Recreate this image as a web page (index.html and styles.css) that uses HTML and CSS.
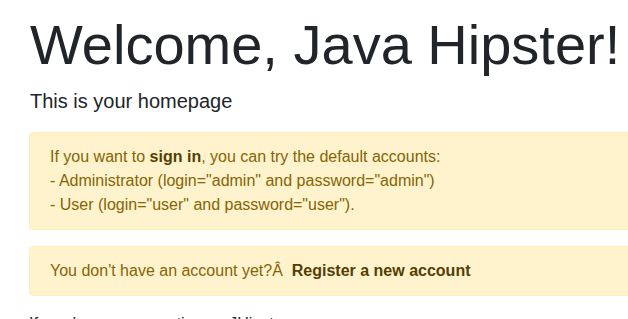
FILE: index.html
```html
<!DOCTYPE html>
<html lang="en">
<head>
    <meta charset="UTF-8">
    <meta name="viewport" content="width=device-width, initial-scale=1.0">
    <title>Home</title>
    <link rel="stylesheet" href="styles.css">
</head>
<body>
    <div class="container">
        <div class="col-main">
            <h1 class="display-4">Welcome, Java Hipster!</h1>
            <p class="lead">This is your homepage</p>

            <div class="alert alert-warning">
                If you want to <a class="alert-link" href="#">sign in</a>, you can try the default accounts:<br>
                - Administrator (login="admin" and password="admin")<br>
                - User (login="user" and password="user").
            </div>

            <div class="alert alert-warning">
                You don't have an account yet?Â&nbsp;
                <a class="alert-link" href="#">Register a new account</a>
            </div>

            <p>If you have any question on JHipster:</p>
        </div>
    </div>
</body>
</html>
```

FILE: styles.css
```css
html, body {
    overflow: hidden;
}
body {
    font-family: "Liberation Sans", Arial, sans-serif;
    font-size: 16px;
    line-height: 1.5;
    color: #212529;
    background-color: #fff;
    margin: 0;
    padding: 0;
}
.container {
    width: 760px;
    padding: 11px 0 0 29px;
}
.col-main {
    width: 100%;
}
p {
    margin: 0 0 16px 0;
}
.display-4 {
    font-size: 56px;
    font-weight: 300;
    line-height: 1.2;
    margin: 0 0 8px 1px;
}
.lead {
    font-size: 20px;
    font-weight: 300;
    margin-left: 1px;
}
.alert {
    padding: 12px 20px;
    margin-bottom: 16px;
    border: 1px solid transparent;
    border-radius: 4px;
}
.alert-warning {
    color: #856404;
    background-color: #fff3cd;
    border-color: #ffeeba;
}
.alert-link {
    font-weight: 700;
    color: #533f03;
    text-decoration: none;
}
```
